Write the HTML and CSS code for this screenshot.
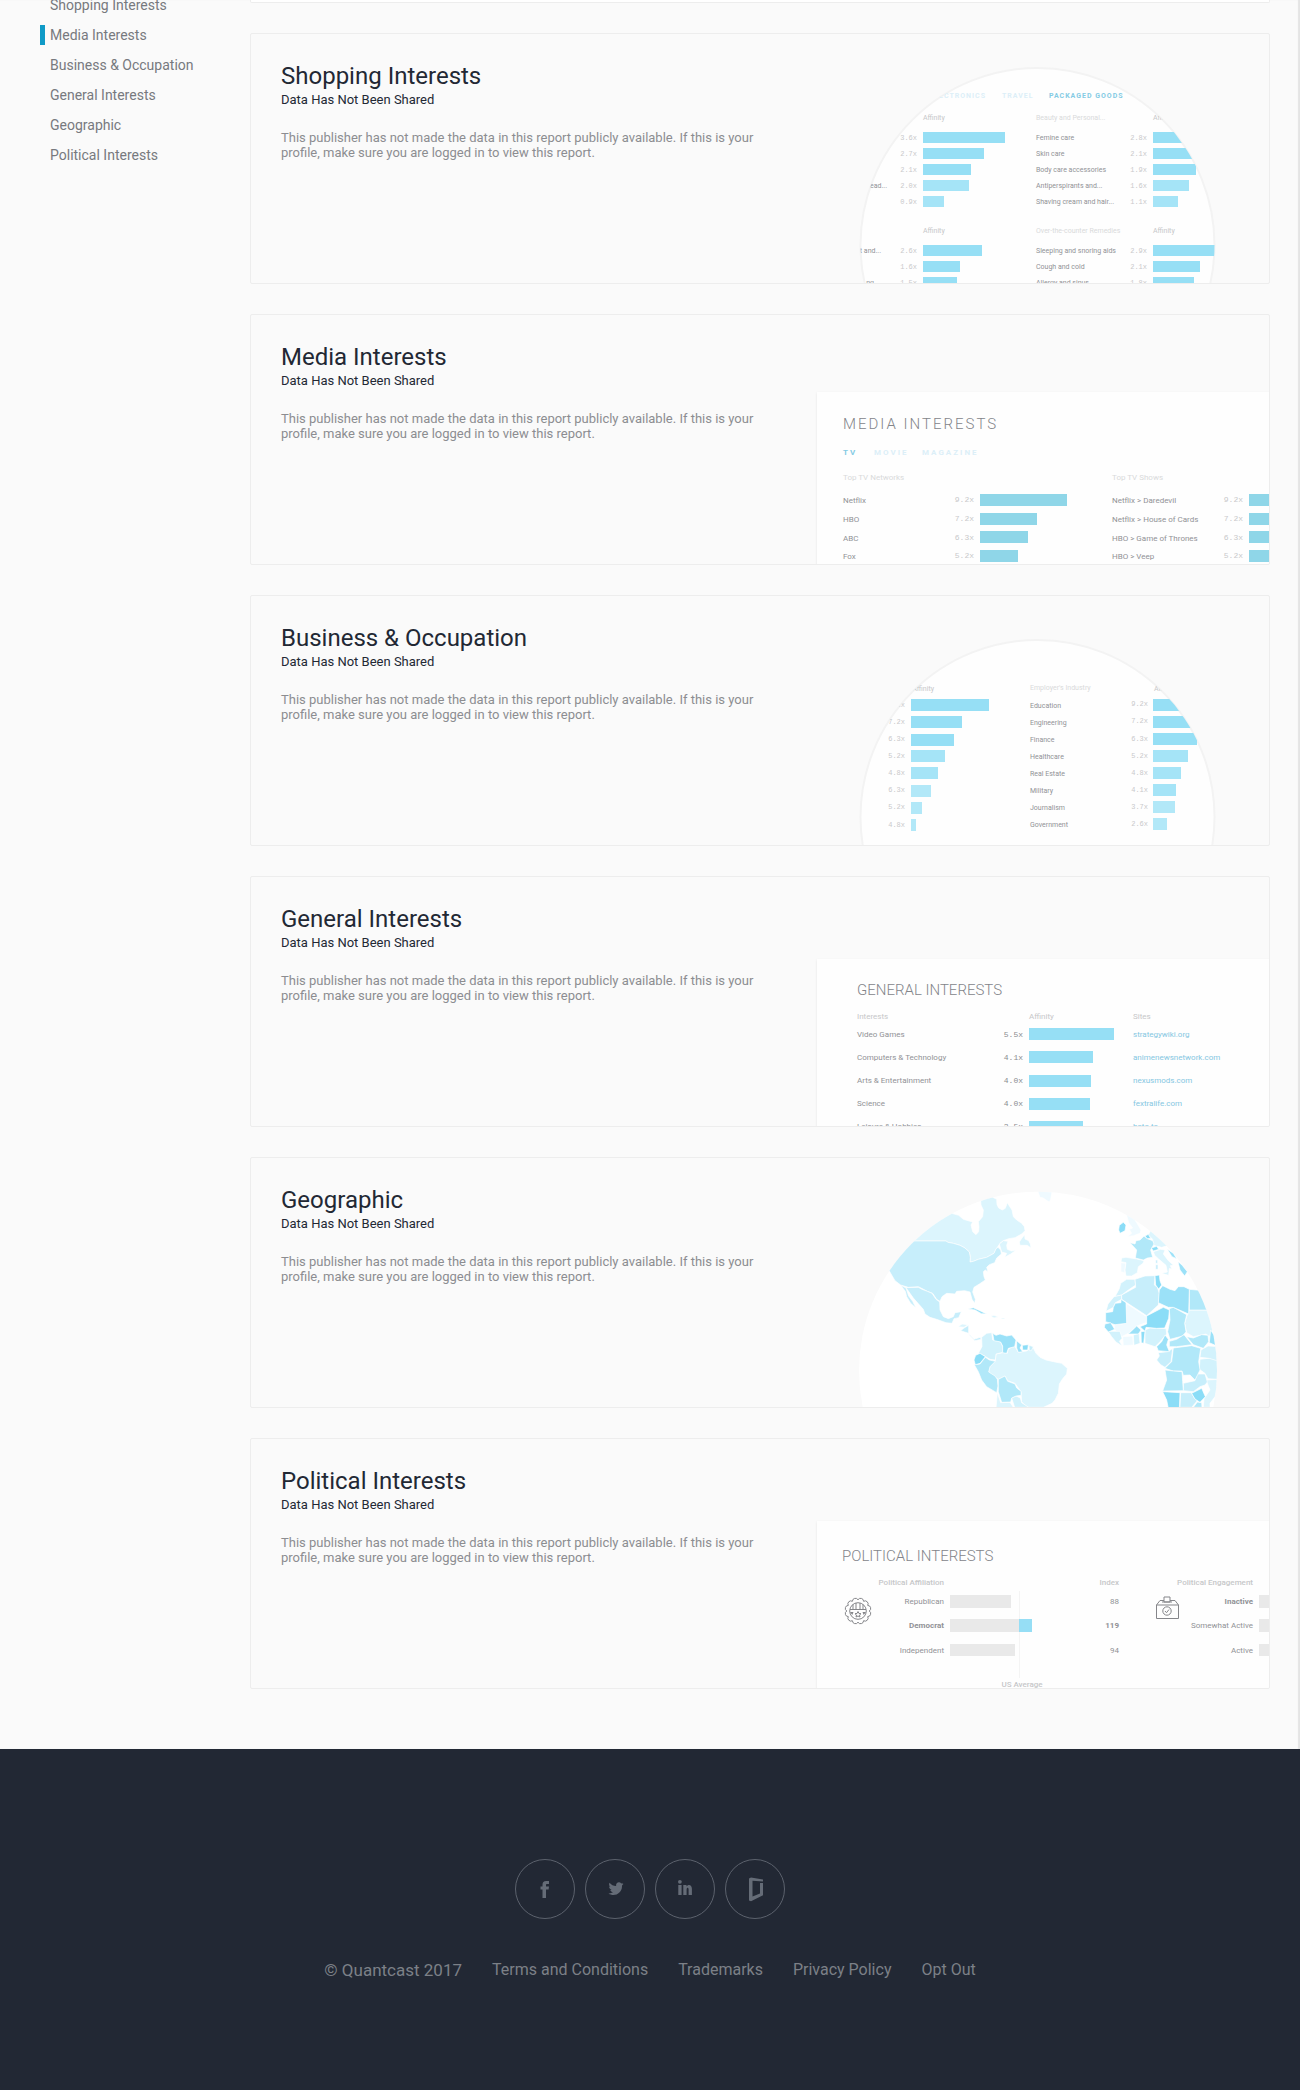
FILE: index.html
```html
<!DOCTYPE html>
<html lang="en">
<head>
<meta charset="utf-8">
<meta name="viewport" content="width=device-width, initial-scale=1">
<title>Quantcast Profile</title>
<link rel="stylesheet" href="styles.css">
</head>
<body>
<div class="page">
  <nav class="sidebar" aria-label="Report sections">
    <a href="#shopping">Shopping Interests</a>
    <a href="#media" class="active">Media Interests</a>
    <a href="#business">Business &amp; Occupation</a>
    <a href="#general">General Interests</a>
    <a href="#geographic">Geographic</a>
    <a href="#political">Political Interests</a>
  </nav>

  <main class="reports">
    <div class="previous"></div>

    <section class="card" id="shopping">
      <div class="copy">
        <h2>Shopping Interests</h2>
        <h3>Data Has Not Been Shared</h3>
        <p>This publisher has not made the data in this report publicly available. If this is your profile, make sure you are logged in to view this report.</p>
      </div>
      <svg class="art" viewBox="0 0 452 249" role="img" aria-label="Sample shopping report">
        <defs><clipPath id="lens-a"><circle cx="220.500" cy="211" r="177"/></clipPath></defs>
        <circle class="lens" cx="220.500" cy="211" r="177"/>
        <g clip-path="url(#lens-a)">
          <g class="tabs tabs-small">
            <text x="169" y="64" text-anchor="end" class="faded">ELECTRONICS</text>
            <text x="185" y="64" class="faded">TRAVEL</text>
            <text x="232" y="64">PACKAGED GOODS</text>
          </g>
          <g class="head">
            <text x="106" y="86">Affinity</text><text x="219" y="86" class="faint">Beauty and Personal...</text><text x="336" y="86">Affinity</text>
            <text x="106" y="199">Affinity</text><text x="219" y="199" class="faint">Over-the-counter Remedies</text><text x="336" y="199">Affinity</text>
          </g>
          <g class="bars">
            <rect x="106" y="98" width="82" height="11"/><rect x="106" y="114" width="61" height="11"/><rect x="106" y="130" width="48" height="11"/><rect x="106" y="146" width="46" height="11" class="soft"/><rect x="106" y="162" width="21" height="11" class="soft"/>
            <rect x="336" y="98" width="70" height="11"/><rect x="336" y="114" width="54" height="11"/><rect x="336" y="130" width="43" height="11"/><rect x="336" y="146" width="36" height="11" class="soft"/><rect x="336" y="162" width="25" height="11" class="soft"/>
            <rect x="106" y="211" width="59" height="11"/><rect x="106" y="227" width="37" height="11"/><rect x="106" y="243" width="34" height="11"/>
            <rect x="336" y="211" width="70" height="11"/><rect x="336" y="227" width="47" height="11"/><rect x="336" y="243" width="41" height="11"/>
          </g>
          <g class="num">
            <text x="100" y="106">3.6x</text><text x="100" y="122">2.7x</text><text x="100" y="138">2.1x</text><text x="100" y="154">2.0x</text><text x="100" y="170">0.9x</text>
            <text x="330" y="106">2.8x</text><text x="330" y="122">2.1x</text><text x="330" y="138">1.9x</text><text x="330" y="154">1.6x</text><text x="330" y="170">1.1x</text>
            <text x="100" y="219">2.6x</text><text x="100" y="235">1.6x</text><text x="100" y="251">1.5x</text>
            <text x="330" y="219">2.9x</text><text x="330" y="235">2.1x</text><text x="330" y="251">1.8x</text>
          </g>
          <g class="label">
            <text x="219" y="106">Femine care</text><text x="219" y="122">Skin care</text><text x="219" y="138">Body care accessories</text><text x="219" y="154">Antiperspirants and...</text><text x="219" y="170">Shaving cream and hair...</text>
            <text x="219" y="219">Sleeping and snoring aids</text><text x="219" y="235">Cough and cold</text><text x="219" y="251">Allergy and sinus</text>
            <text x="70" y="154" text-anchor="end">ead...</text><text x="64" y="219" text-anchor="end">t and...</text><text x="57" y="251" text-anchor="end">ng</text>
          </g>
        </g>
      </svg>
    </section>

    <section class="card" id="media">
      <div class="copy">
        <h2>Media Interests</h2>
        <h3>Data Has Not Been Shared</h3>
        <p>This publisher has not made the data in this report publicly available. If this is your profile, make sure you are logged in to view this report.</p>
      </div>
      <svg class="art" viewBox="0 0 452 249" role="img" aria-label="Sample media report">
        <rect class="sheet" x="0" y="77" width="470" height="190"/>
        <text class="title spaced" x="26" y="114">MEDIA INTERESTS</text>
        <g class="tabs">
          <text x="26" y="140">TV</text><text x="57" y="140" class="faded">MOVIE</text><text x="105" y="140" class="faded">MAGAZINE</text>
        </g>
        <g class="head large faint"><text x="26" y="165">Top TV Networks</text><text x="295" y="165">Top TV Shows</text></g>
        <g class="bars teal">
          <rect x="163" y="179" width="87" height="12"/><rect x="163" y="198" width="57" height="12"/><rect x="163" y="216" width="48" height="12"/><rect x="163" y="235" width="38" height="12"/>
          <rect x="432" y="179" width="30" height="12"/><rect x="432" y="198" width="30" height="12"/><rect x="432" y="216" width="30" height="12"/><rect x="432" y="235" width="30" height="12"/>
        </g>
        <g class="num large">
          <text x="157" y="187">9.2x</text><text x="157" y="206">7.2x</text><text x="157" y="225">6.3x</text><text x="157" y="243">5.2x</text>
          <text x="426" y="187">9.2x</text><text x="426" y="206">7.2x</text><text x="426" y="225">6.3x</text><text x="426" y="243">5.2x</text>
        </g>
        <g class="label large">
          <text x="26" y="188">Netflix</text><text x="26" y="207">HBO</text><text x="26" y="226">ABC</text><text x="26" y="244">Fox</text>
          <text x="295" y="188">Netflix &gt; Daredevil</text><text x="295" y="207">Netflix &gt; House of Cards</text><text x="295" y="226">HBO &gt; Game of Thrones</text><text x="295" y="244">HBO &gt; Veep</text>
        </g>
      </svg>
    </section>

    <section class="card" id="business">
      <div class="copy">
        <h2>Business &amp; Occupation</h2>
        <h3>Data Has Not Been Shared</h3>
        <p>This publisher has not made the data in this report publicly available. If this is your profile, make sure you are logged in to view this report.</p>
      </div>
      <svg class="art" viewBox="0 0 452 249" role="img" aria-label="Sample business report">
        <defs><clipPath id="lens-b"><circle cx="220.500" cy="221" r="177"/></clipPath></defs>
        <circle class="lens" cx="220.500" cy="221" r="177"/>
        <g clip-path="url(#lens-b)">
          <g class="head"><text x="117" y="95" text-anchor="end">Affinity</text><text x="213" y="94" class="faint">Employer's Industry</text><text x="337" y="95">Affinity</text></g>
          <g class="bars">
            <rect x="94" y="103" width="78" height="12"/><rect x="94" y="120" width="51" height="12"/><rect x="94" y="138" width="43" height="12"/><rect x="94" y="154" width="34" height="12" class="soft"/><rect x="94" y="171" width="27" height="12" class="soft"/><rect x="94" y="189" width="20" height="12" class="softer"/><rect x="94" y="206" width="11" height="12" class="softer"/><rect x="94" y="223" width="5" height="12" class="softer"/>
            <rect x="336" y="103" width="70" height="12"/><rect x="336" y="120" width="60" height="12"/><rect x="336" y="137" width="44" height="12"/><rect x="336" y="154" width="35" height="12" class="soft"/><rect x="336" y="171" width="28" height="12" class="soft"/><rect x="336" y="188" width="23" height="12" class="soft"/><rect x="336" y="205" width="22" height="12" class="softer"/><rect x="336" y="222" width="14" height="12" class="softer"/>
          </g>
          <g class="num">
            <text x="88" y="111">9.2x</text><text x="88" y="128">7.2x</text><text x="88" y="145">6.3x</text><text x="88" y="162">5.2x</text><text x="88" y="179">4.8x</text><text x="88" y="196">6.3x</text><text x="88" y="213">5.2x</text><text x="88" y="231">4.8x</text>
            <text x="331" y="110">9.2x</text><text x="331" y="127">7.2x</text><text x="331" y="145">6.3x</text><text x="331" y="162">5.2x</text><text x="331" y="179">4.8x</text><text x="331" y="196">4.1x</text><text x="331" y="213">3.7x</text><text x="331" y="230">2.6x</text>
          </g>
          <g class="label">
            <text x="213" y="112">Education</text><text x="213" y="129">Engineering</text><text x="213" y="146">Finance</text><text x="213" y="163">Healthcare</text><text x="213" y="180">Real Estate</text><text x="213" y="197">Military</text><text x="213" y="214">Journalism</text><text x="213" y="231">Government</text>
          </g>
        </g>
      </svg>
    </section>

    <section class="card" id="general">
      <div class="copy">
        <h2>General Interests</h2>
        <h3>Data Has Not Been Shared</h3>
        <p>This publisher has not made the data in this report publicly available. If this is your profile, make sure you are logged in to view this report.</p>
      </div>
      <svg class="art" viewBox="0 0 452 249" role="img" aria-label="Sample general interests report">
        <rect class="sheet" x="0" y="82" width="470" height="190"/>
        <text class="title" x="40" y="118">GENERAL INTERESTS</text>
        <g class="head large"><text x="40" y="142">Interests</text><text x="212" y="142">Affinity</text><text x="316" y="142">Sites</text></g>
        <g class="bars">
          <rect x="212" y="151" width="85" height="12"/><rect x="212" y="174" width="64" height="12"/><rect x="212" y="198" width="62" height="12"/><rect x="212" y="221" width="61" height="12"/><rect x="212" y="244" width="54" height="12"/>
        </g>
        <g class="num large dark"><text x="206" y="160">5.5x</text><text x="206" y="183">4.1x</text><text x="206" y="206">4.0x</text><text x="206" y="229">4.0x</text><text x="206" y="252">3.5x</text></g>
        <g class="label large"><text x="40" y="160">Video Games</text><text x="40" y="183">Computers &amp; Technology</text><text x="40" y="206">Arts &amp; Entertainment</text><text x="40" y="229">Science</text><text x="40" y="252">Leisure &amp; Hobbies</text></g>
        <g class="label large site"><text x="316" y="160">strategywiki.org</text><text x="316" y="183">animenewsnetwork.com</text><text x="316" y="206">nexusmods.com</text><text x="316" y="229">fextralife.com</text><text x="316" y="252">bato.to</text></g>
      </svg>
    </section>

    <section class="card" id="geographic">
      <div class="copy">
        <h2>Geographic</h2>
        <h3>Data Has Not Been Shared</h3>
        <p>This publisher has not made the data in this report publicly available. If this is your profile, make sure you are logged in to view this report.</p>
      </div>
      <svg class="art" viewBox="-69 -36 1356 747" role="img" aria-label="World map">
        <defs><clipPath id="globe"><circle cx="594" cy="602" r="537"/></clipPath></defs>
        <circle cx="594" cy="602" r="537" fill="#fff"/>
        <g class="map" clip-path="url(#globe)">
          <g class="t1">
            <path d="M592 60H637L632 88 628 96 618 90 610 84 600 82Z"/>
            <path d="M843 278L857 280 854 308 843 305Z"/>
            <path d="M858 400L920 440 918 458 890 468 865 490 845 500 825 480 822 465 860 460Z"/>
            <path d="M848 500L878 498 880 525 850 527Z"/>
            <path d="M858 128L878 140 890 158 903 180 900 190 880 197 862 200 875 190 868 178 878 174 866 158Z"/>
          </g>
          <g class="t2">
            <path d="M150 213H318L324 217 340 220 360 226 375 234 388 246 391 262 390 276 400 274 415 268 440 262 462 250 468 238 480 220 490 212 506 206 525 203 545 192 555 182 553 170 545 160 530 150 520 140 516 120 508 108 502 98 496 115 487 120 476 114 471 104 470 88 455 80 440 84 422 92 423 105 430 120 428 140 415 155 417 170 416 185 408 194 398 185 393 165 398 156 384 152 370 148 356 136 335 130 200 100Z"/>
            <path d="M538 216L546 204 554 194 555 207 566 212 571 222 573 234 562 226 540 226Z"/>
            <path d="M478 222L490 212 504 214 500 226 502 238 514 243 528 241 512 252 494 262 500 250 485 246Z"/>
            <path d="M466 572L468 552 490 548 502 550 505 537 515 532 525 530 535 547 560 543 578 530 588 550 600 562 618 570 640 575 665 580 682 595 680 612 668 626 658 642 655 670 645 690 636 700 610 712 560 712 545 695 543 665 525 640 503 632 495 618 475 628 466 622 445 608 450 590Z"/>
            <path d="M472 668L482 698 510 697 522 715 468 715Z"/>
            <path d="M845 264L858 262 890 267 912 272 909 280 895 290 892 308 875 318 858 318 855 300 858 278 843 275Z"/>
            <path d="M925 195L934 178 960 195 990 225 965 232 940 226 938 208Z"/>
            <path d="M940 245L962 238 975 240 970 252 985 272 1000 285 991 287 996 298 988 295 986 316 965 310 982 306 978 286 955 266 944 256Z"/>
            <path d="M1048 420H1105L1118 480 1108 500 1098 492 1085 495 1060 500 1040 488 1034 460 1040 440Z"/>
            <path d="M1098 630L1140 628 1125 680 1110 700V712H1090L1092 686 1110 660Z"/>
            <path d="M354 470L366 462 384 464 372 472Z"/><path d="M452 438L462 436 475 441 462 444ZM484 444h10v3h-10Z"/>
          </g>
          <g class="t3">
            <path d="M425 502L440 490 455 488 458 510 482 516 488 530 488 547 468 552 466 570 450 568 430 556 416 548 426 530Z"/>
            <path d="M860 328L885 328 887 345 865 360 845 375 825 380 838 356 842 340Z"/>
            <path d="M822 380L845 375 845 388 826 398 820 412 798 424 804 402Z"/>
            <path d="M915 480L930 474 950 475 978 476 980 492 960 515 945 530 915 520Z"/>
            <path d="M880 495L897 490 900 520 882 526Z"/><path d="M804 484L840 484 846 505 838 514 847 528 828 516 815 500Z"/>
            <path d="M1080 568L1120 563 1140 580 1135 628 1104 626 1095 610 1078 598Z"/>
            <path d="M1083 540L1104 528 1140 530 1140 575 1108 565 1080 562Z"/>
            <path d="M515 684L528 678 541 684 545 698 566 712H524Z"/>
          </g>
          <g class="t4">
            <path d="M130 213H318L324 217 340 220 360 226 375 234 388 246 391 262 390 276 400 274 415 268 440 262 462 250 468 236 474 232 482 240 484 252 470 264 464 278 448 284 440 292 444 306 436 300 430 305 432 320 436 330 418 342 402 352 398 366 406 388 404 400 396 388 390 366 374 362 350 364 345 372 320 370 306 380 300 394 290 388 278 370 262 364 245 355 235 350 205 352 182 345 165 332 148 303 100 300Z"/>
            <path d="M198 353L235 352 246 358 262 364 276 370 288 388 299 396 300 420 310 440 325 446 340 440 345 428 364 425 356 443 342 446 336 460 318 458 290 448 270 442 255 432 250 418 234 400 220 384 210 370Z"/>
            <path d="M182 346L198 354 206 378 218 394 228 414 212 400 200 380 196 364Z"/>
            <path d="M362 482L372 474 386 466 386 490 374 486Z"/>
            <path d="M885 328L915 318 945 317 943 345 952 352 958 370 955 405 920 437 845 388 845 375 887 352Z"/>
            <path d="M955 548L985 545 998 535 993 575 975 592 962 584 950 570 958 558Z"/>
            <path d="M1030 640L1065 632 1070 612 1095 612 1102 636 1095 645 1080 650 1060 665 1030 662Z"/>
            <path d="M1022 668L1054 668 1064 686 1072 692 1055 712H1020Z"/>
            <path d="M567 526L580 530 574 542 568 542Z"/><path d="M384 492L390 496 402 508 420 502 424 508 404 512Z"/>
          </g>
          <g class="t5">
            <path d="M870 218L885 222 888 212 900 210 912 198 922 206 938 212 942 222 932 240 938 262 922 264 910 270 886 264 890 240Z"/>
            <path d="M403 584L420 582 436 562 448 570 466 574 450 590 446 606 465 618 472 628 474 648 470 668 440 650 425 630 415 605Z"/>
            <path d="M475 628L495 618 503 634 525 642 530 654 543 664 543 676 528 678 515 684 512 696 485 697 475 665Z"/>
            <path d="M1048 358L1090 362 1110 420H1048Z"/>
            <path d="M988 416L1000 412 1040 434 1034 460 1038 485 1028 498 990 508 983 485 990 450Z"/>
            <path d="M988 514L1010 508 1032 494 1056 524 1010 530 988 530Z"/>
            <path d="M1040 500L1060 504 1085 494 1104 496 1106 515 1090 535 1060 524Z"/>
            <path d="M1000 534L1055 527 1082 535 1076 575 1080 600 1065 630 1050 615 1030 616 1026 603 1000 603 975 595 995 575Z"/>
            <path d="M975 600L1000 603 1026 605 1028 635 1030 662 968 663 980 630Z"/>
            <path d="M1060 712L1072 696 1085 698 1086 712Z"/>
          </g>
          <g class="t6">
            <path d="M958 360L968 347 990 358 1005 362 1015 350 1032 350 1048 358 1046 432 1000 412 985 412 955 398Z"/>
            <path d="M797 428L818 425 820 412 826 400 843 398V388L858 398 860 460 825 464 797 455Z"/>
            <path d="M458 490L468 496 480 492 500 498 515 495 528 510 524 530 505 535 500 550 488 548 488 528 482 516 462 512Z"/>
            <path d="M530 512L545 525 540 534 548 545 535 547 530 534Z"/>
            <path d="M865 492L890 468 903 480 895 492Z"/><path d="M795 462L812 458 824 478 805 486 793 472Z"/>
            <path d="M975 495L985 508 980 525 988 545 955 542 950 530 965 515Z"/>
            <path d="M1112 480L1125 500 1135 530 1108 518Z"/>
            <path d="M384 417L400 413 420 422 440 432 424 431 405 420Z"/>
            <path d="M1014 275L1026 285 1042 305 1034 318 1020 300ZM982 238L1000 250 1010 266 996 260Z"/>
          </g>
          <g class="t7">
            <path d="M838 166L850 157 858 165 855 182 840 190 836 180Z"/>
            <path d="M407 556L420 550 436 560 420 580 406 584 402 570Z"/>
            <path d="M547 526L565 524 563 540 548 540Z"/>
            <path d="M945 317L958 315 960 332 965 345 956 357 947 345Z"/>
            <path d="M920 438L970 412 988 420 986 445 974 474 950 475 918 472 915 484 900 470 920 462Z"/>
            <path d="M903 485L915 484 911 520 904 518Z"/>
            <path d="M968 665L1020 668 1018 715 985 715 980 690Z"/>
            <path d="M1055 670L1085 655 1096 680 1080 697 1065 687Z"/>
            <path d="M915 198L925 193 932 205 922 206ZM934 234L950 229 956 238 940 243Z"/>
          </g>
          <path class="t4" d="M947 270h6v10h-6ZM947 284h7v14h-7Z"/>
        </g>
      </svg>
    </section>

    <section class="card" id="political">
      <div class="copy">
        <h2>Political Interests</h2>
        <h3>Data Has Not Been Shared</h3>
        <p>This publisher has not made the data in this report publicly available. If this is your profile, make sure you are logged in to view this report.</p>
      </div>
      <svg class="art" viewBox="0 0 452 249" role="img" aria-label="Sample political report">
        <rect class="sheet" x="0" y="82" width="470" height="190"/>
        <text class="title" x="25" y="122">POLITICAL INTERESTS</text>
        <g class="head large medium" text-anchor="end"><text x="127" y="146">Political Affiliation</text><text x="302" y="146">Index</text><text x="436" y="146">Political Engagement</text></g>
        <g fill="#e9e9e9">
          <rect x="133" y="156" width="61" height="13"/><rect x="133" y="180" width="69" height="13"/><rect x="133" y="205" width="65" height="12"/>
          <rect x="442" y="156" width="20" height="13"/><rect x="442" y="180" width="20" height="13"/><rect x="442" y="205" width="20" height="12"/>
        </g>
        <path d="M202.500 152V239" stroke="#f4f4f4"/>
        <rect x="202" y="180" width="13" height="13" fill="#96def5"/>
        <g class="label large" text-anchor="end">
          <text x="127" y="165">Republican</text><text x="127" y="189" class="strong">Democrat</text><text x="127" y="214">Independent</text>
          <text x="302" y="165">88</text><text x="302" y="189" class="strong">119</text><text x="302" y="214">94</text>
          <text x="436" y="165" class="strong">Inactive</text><text x="436" y="189">Somewhat Active</text><text x="436" y="214">Active</text>
        </g>
        <g class="head large medium" text-anchor="middle"><text x="205" y="248">US Average</text></g>
        <g class="line-icon" transform="translate(41 172)">
          <path d="M11.200 0A3 3 0 0 1 9.700 5.600A3 3 0 0 1 5.600 9.700A3 3 0 0 1 0 11.200A3 3 0 0 1-5.600 9.700A3 3 0 0 1-9.700 5.600A3 3 0 0 1-11.200 0A3 3 0 0 1-9.700-5.600A3 3 0 0 1-5.600-9.700A3 3 0 0 1 0-11.200A3 3 0 0 1 5.600-9.700A3 3 0 0 1 9.700-5.600A3 3 0 0 1 11.200 0Z"/>
          <circle r="8.300"/><path d="M-8-1.500H8M-5-6.500V-2M-2-8V-2M2-8V-2M5-6.500V-2"/>
          <path d="M0 .5L1 2.500 3 2.700 1.500 4 2 6 0 5-2 6-1.500 4-3 2.700-1 2.500Z"/>
          <path class="solid" d="M-8 1h3.500l-1.200 3ZM8 1H4.500l1.200 3Z"/>
        </g>
        <g class="line-icon">
          <path d="M339.500 166H361.500V179.500H339.500ZM339.500 166L343 161.500H347M353 161.500H358L361.500 166M347 163V158H353V163ZM345 163H355"/>
          <circle cx="350" cy="172" r="4.200"/><path d="M348 172L349.500 173.700 352 170.500"/>
        </g>
      </svg>
    </section>
  </main>
</div>

<footer class="footer">
  <div class="social">
    <a href="#facebook" aria-label="Facebook"><svg viewBox="0 0 60 60"><path d="M27.500 39V30.500H25.500V27.500H27.500V25.800C27.500 23.200 28.700 22 31.200 22H34V25H32.300C31.200 25 31 25.400 31 26.300V27.500H34L33.600 30.500H31V39Z"/></svg></a>
    <a href="#twitter" aria-label="Twitter"><svg viewBox="0 0 60 60"><path d="M38.500 24.700C38 25 37.500 25.100 37 25.200C37.500 24.900 37.900 24.300 38.100 23.700C37.600 24 37 24.200 36.300 24.400C34.300 22.200 30.500 23.600 31.100 27.100C28.500 27 26.100 25.700 24.500 23.700C23.600 25.300 24.100 27 25.500 28C25 28 24.500 27.800 24.100 27.600C24.100 29.100 25.100 30.500 26.600 30.900C26.100 31 25.700 31 25.200 30.900C25.600 32.100 26.700 33 28.100 33.100C26.900 34.100 25.100 34.700 23.400 34.500C29.500 38.300 37 34.300 37 27.200V26.600C37.600 26.100 38.100 25.500 38.500 24.700Z"/></svg></a>
    <a href="#linkedin" aria-label="LinkedIn"><svg viewBox="0 0 60 60"><circle cx="24.900" cy="22.800" r="1.900"/><path d="M23.300 26H26.600V36H23.300ZM28.300 26H31.500V27.400C33.200 25 36.900 25.300 36.900 29.800V36H33.600V30.600C33.600 27.800 31.600 28.300 31.600 30.400V36H28.300Z"/></svg></a>
    <a href="#glassdoor" aria-label="Glassdoor"><svg viewBox="0 0 60 60"><path fill-rule="evenodd" d="M24 19.500L26 18.500 38 20.500V22.500L27.500 21.800V37.500L35 34.500V24H38V36.200L26 42.300 24 41.500Z"/></svg></a>
  </div>
  <div class="legal">
    <span class="copyright">© Quantcast 2017</span>
    <a href="#terms">Terms and Conditions</a>
    <a href="#trademarks">Trademarks</a>
    <a href="#privacy">Privacy Policy</a>
    <a href="#optout">Opt Out</a>
  </div>
</footer>
</body>
</html>
```
FILE: styles.css
```css
* { box-sizing: border-box; }
body {
  margin: 0;
  background: #fafafa;
  color: #222834;
  font-family: Roboto, "Liberation Sans", sans-serif;
}
a { color: inherit; text-decoration: none; }

.page {
  display: grid;
  grid-template-columns: 250px 1fr;
  padding: 0 30px 60px 0;
  box-shadow: inset -2px 0 1px #e4e4e4;
}

/* the window is scrolled past the first sidebar entries */
.sidebar { margin-top: -5px; padding-left: 40px; font-size: 14px; line-height: 20px; color: #77797e; }
.sidebar a { display: block; margin-bottom: 10px; padding-left: 5px; border-left: 5px solid transparent; }
.sidebar .active { border-color: #0f9ac7; }

.reports { display: flex; flex-direction: column; gap: 30px; min-width: 0; }
.previous { height: 3px; background: #fff; border: 1px solid #ededed; border-top: 0; border-radius: 0 0 2px 2px; }
.card {
  display: flex;
  justify-content: space-between;
  border: 1px solid #ededed;
  border-radius: 2px;
  overflow: hidden;
}
.copy { flex: 1; padding: 28px 50px 28px 30px; }
.copy h2 { margin: 0; font-size: 24px; line-height: 28px; font-weight: 400; }
.copy h3 { margin: 0 0 20px; font-size: 13px; line-height: 20px; font-weight: 400; }
.copy p { margin: 0; font-size: 13px; line-height: 15px; color: #8c8d91; }
.art { display: block; flex: none; width: 452px; height: 249px; overflow: visible; }

/* report previews */
.art text { font-size: 7px; }
.art .large text { font-size: 8px; }
.lens { fill: #fefefe; stroke: #f3f3f3; stroke-width: 2; }
.sheet { fill: #fefefe; filter: drop-shadow(0 1px 1px #00000018); }
.art .title { font-size: 15px; font-weight: 300; fill: #83858a; }
.art .spaced { letter-spacing: 2px; }
.art .tabs text { font-size: 8px; font-weight: 700; letter-spacing: 2px; fill: #84cbe4; }
.art .tabs-small text { font-size: 7px; letter-spacing: 1px; }
.art .tabs .faded { fill: #dceff8; }
.head { fill: #c6c7c9; }
.head.medium { font-weight: 500; }
.head .faint, .head.faint { fill: #d9dadb; }
.num { fill: #c9c9cb; text-anchor: end; font-family: "Liberation Mono", monospace; }
.num.dark { fill: #8b8c90; }
.label { fill: #919296; }
.site { fill: #85c7e2; }
.strong { font-weight: 700; }
.bars { fill: #96dff5; }
.bars.teal { fill: #8fd6e8; }
.bars .soft { fill: #a5e4f7; }
.bars .softer { fill: #b2e8f8; }

.map { stroke: #fff; stroke-width: 2; stroke-linejoin: round; }
.t1 { fill: #effaff; }
.t2 { fill: #dcf5fd; }
.t3 { fill: #d2f2fc; }
.t4 { fill: #c7eefb; }
.t5 { fill: #b1e8f9; }
.t6 { fill: #9be1f8; }
.t7 { fill: #8bddf7; }
.line-icon { fill: none; stroke: #85868a; stroke-width: 1; stroke-linejoin: round; }
.line-icon .solid { fill: #85868a; stroke: none; }

.footer {
  display: flex;
  flex-direction: column;
  align-items: center;
  gap: 41px;
  padding: 110px 30px;
  background: #222834;
  color: #7c8087;
}
.social { display: flex; gap: 10px; }
.social a { width: 60px; height: 60px; border: 1px solid #5c626d; border-radius: 50%; }
.social svg { display: block; margin: -1px; width: 60px; height: 60px; fill: #656c77; }
.legal { display: flex; gap: 30px; font-size: 16px; line-height: 20px; }
.copyright { font-size: 17px; }
```
